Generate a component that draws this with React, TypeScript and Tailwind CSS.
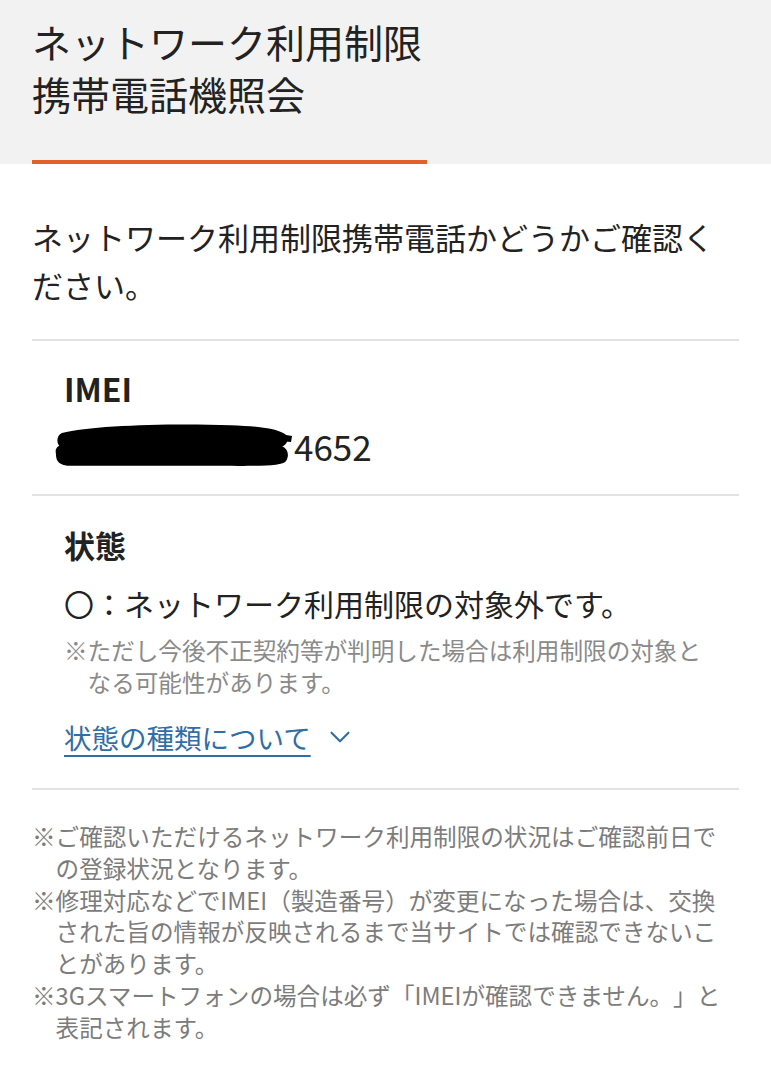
import { ChevronDown } from "lucide-react";

const notes = [
	"※ご確認いただけるネットワーク利用制限の状況はご確認前日での登録状況となります。",
	"※修理対応などでIMEI（製造番号）が変更になった場合は、交換された旨の情報が反映されるまで当サイトでは確認できないことがあります。",
	"※3Gスマートフォンの場合は必ず「IMEIが確認できません。」と表記されます。",
];

function Redaction() {
	return (
		<svg width="242" height="46" viewBox="0 0 244 46" className="-ml-3 shrink-0">
			<path
				d="M10 10 C 40 2, 120 0, 180 2 C 210 3, 230 6, 236 12 C 240 18, 236 26, 220 26 L 20 28 C 4 28, 2 14, 10 10 Z"
				fill="#000"
			/>
			<path
				d="M4 31 C 2 22, 10 20, 30 20 L 225 22 C 238 22, 240 32, 236 38 C 232 44, 200 43, 160 43 L 20 43 C 6 43, 4 37, 4 31 Z"
				fill="#000"
			/>
			<path d="M230 11 L 242 13 L 241 19 L 230 18 Z" fill="#000" />
		</svg>
	);
}

export default function App() {
	return (
		<div className="min-h-screen bg-white font-['Noto_Sans_CJK_JP','Noto_Sans',sans-serif] text-[#222]">
			{/* Header */}
			<header className="bg-[#f2f2f2] px-8 pt-[15px]">
				<h1 className="text-[39px] font-normal leading-[52px] tracking-normal">
					ネットワーク利用制限
					<br />
					携帯電話機照会
				</h1>
				<div className="mt-[41px] h-[4px] w-[395px] bg-[#e0612a]" />
			</header>

			<main className="px-8">
				<p className="pt-[49px] pb-[30px] text-[31px] leading-[48px]">
					ネットワーク利用制限携帯電話かどうかご確認ください。
				</p>

				{/* IMEI */}
				<section className="border-t-2 border-[#e2e2e2] px-8 pt-[27px] pb-[28px]">
					<h2 className="text-[32px] font-bold leading-[40px]">IMEI</h2>
					<div className="mt-[18px] flex h-[40px] items-center">
						<Redaction />
						<span className="text-[35px] leading-[40px]">4652</span>
					</div>
				</section>

				{/* Status */}
				<section className="border-t-2 border-[#e2e2e2] px-8 pt-[29px] pb-[31px]">
					<h2 className="text-[31px] font-bold leading-[40px]">状態</h2>
					<p className="mt-[16px] text-[30px] leading-[44px]">
						〇：ネットワーク利用制限の対象外です。
					</p>
					<p className="mt-[9px] pl-[1em] -indent-[1em] text-[23.6px] leading-[32px] text-[#8a8a8a]">
						※ただし今後不正契約等が判明した場合は利用制限の対象となる可能性があります。
					</p>
					<div className="mt-[19px] flex h-[40px] items-center">
						<a
							href="#"
							className="text-[27.5px] leading-[40px] text-[#2f6ea6] underline decoration-2 underline-offset-[6px]"
						>
							状態の種類について
						</a>
						<ChevronDown className="ml-[12px] text-[#2f6ea6]" size={34} strokeWidth={1.5} />
					</div>
				</section>

				{/* Footer notes */}
				<section className="border-t-2 border-[#e2e2e2] pt-[31px] pb-10">
					{notes.map((n) => (
						<p
							key={n}
							className="pl-[1em] -indent-[1em] text-[23.6px] leading-[31.8px] text-[#7c7c7c] [text-spacing-trim:space-all]"
						>
							{n}
						</p>
					))}
				</section>
			</main>
		</div>
	);
}
